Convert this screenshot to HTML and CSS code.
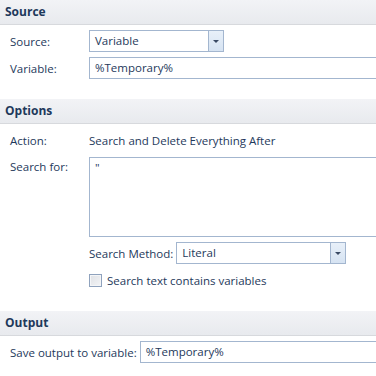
FILE: index.html
```html
<!DOCTYPE html>
<html lang="en">
<head>
  <meta charset="UTF-8">
  <meta name="viewport" content="width=device-width, initial-scale=1.0">
  <title>Search Text</title>
  <link rel="stylesheet" href="styles.css">
</head>
<body>
  <div class="panel">
    <div class="section">
      <div class="section-header">Source</div>
      <div class="section-body">
        <div class="row">
          <label class="label">Source:</label>
          <div class="combo combo-source">
            <span class="combo-text">Variable</span>
            <span class="combo-btn"><span class="arrow"></span></span>
          </div>
        </div>
        <div class="row">
          <label class="label">Variable:</label>
          <div class="field field-wide">%Temporary%</div>
        </div>
      </div>
    </div>

    <div class="section">
      <div class="section-header">Options</div>
      <div class="section-body">
        <div class="row row-text">
          <label class="label">Action:</label>
          <span class="value">Search and Delete Everything After</span>
        </div>
        <div class="row row-top">
          <label class="label">Search for:</label>
          <div class="field field-wide textarea">"</div>
        </div>
        <div class="row row-indent">
          <label class="label-inline">Search Method:</label>
          <div class="combo combo-method">
            <span class="combo-text">Literal</span>
            <span class="combo-btn"><span class="arrow"></span></span>
          </div>
        </div>
        <div class="row row-indent">
          <span class="checkbox"></span>
          <span class="check-label">Search text contains variables</span>
        </div>
      </div>
    </div>

    <div class="section">
      <div class="section-header">Output</div>
      <div class="section-body">
        <div class="row">
          <label class="label-inline">Save output to variable:</label>
          <div class="field field-wide">%Temporary%</div>
        </div>
      </div>
    </div>
  </div>
</body>
</html>
```

FILE: styles.css
```css
:root {
  --text: #1e395b;
  --border: #a3b6cf;
  --header-top: #f2f3f6;
  --header-bottom: #e8eaee;
}
* {
  box-sizing: border-box;
  margin: 0;
  padding: 0;
}
body {
  font-family: 'Open Sans', 'Noto Sans', sans-serif;
  font-size: 11.5px;
  color: var(--text);
  background-color: white;
  overflow: hidden;
}
.panel {
  width: 400px;
}
.section {
  margin-bottom: 20px;
}
.section-header {
  height: 25px;
  padding-left: 5px;
  line-height: 24px;
  font-weight: bold;
  font-size: 12px;
  background: linear-gradient(var(--header-top), var(--header-bottom));
  border-bottom: 1px solid #d7d9dd;
}
.section-body {
  padding: 5px 0 0 10px;
  display: flex;
  flex-direction: column;
  gap: 5px;
}
.row {
  display: flex;
  align-items: center;
  min-height: 22px;
}
.row-text {
  min-height: 23px;
}
.row-top {
  align-items: flex-start;
}
.row-indent {
  padding-left: 79px;
}
.label {
  width: 79px;
  flex-shrink: 0;
}
.row-top .label {
  padding-top: 2px;
}
.label-inline {
  margin-right: 3px;
  white-space: nowrap;
}
.value {
  white-space: nowrap;
}
.field {
  height: 22px;
  border: 1px solid var(--border);
  padding: 0 5px;
  line-height: 20px;
  background: white;
  white-space: nowrap;
}
.field-wide {
  flex: 1;
}
.textarea {
  height: 80px;
}
.combo {
  display: flex;
  height: 22px;
  border: 1px solid var(--border);
  background: white;
}
.combo-source {
  width: 135px;
}
.combo-method {
  width: 170px;
}
.combo-text {
  flex: 1;
  padding-left: 5px;
  line-height: 20px;
}
.combo-btn {
  width: 15px;
  border-left: 1px solid var(--border);
  background: linear-gradient(#e8f0f9, #d6e3f2);
  display: flex;
  align-items: center;
  justify-content: center;
}
.arrow {
  width: 0;
  height: 0;
  border-left: 3.5px solid transparent;
  border-right: 3.5px solid transparent;
  border-top: 3px solid #3a4a64;
}
.checkbox {
  width: 13px;
  height: 13px;
  border: 1px solid #8fa2bd;
  background: linear-gradient(135deg, #dfe1e5, #f3f4f6);
  box-shadow: inset 0 0 0 1px #f4f5f7;
  margin-right: 5px;
}
.check-label {
  white-space: nowrap;
}
```
